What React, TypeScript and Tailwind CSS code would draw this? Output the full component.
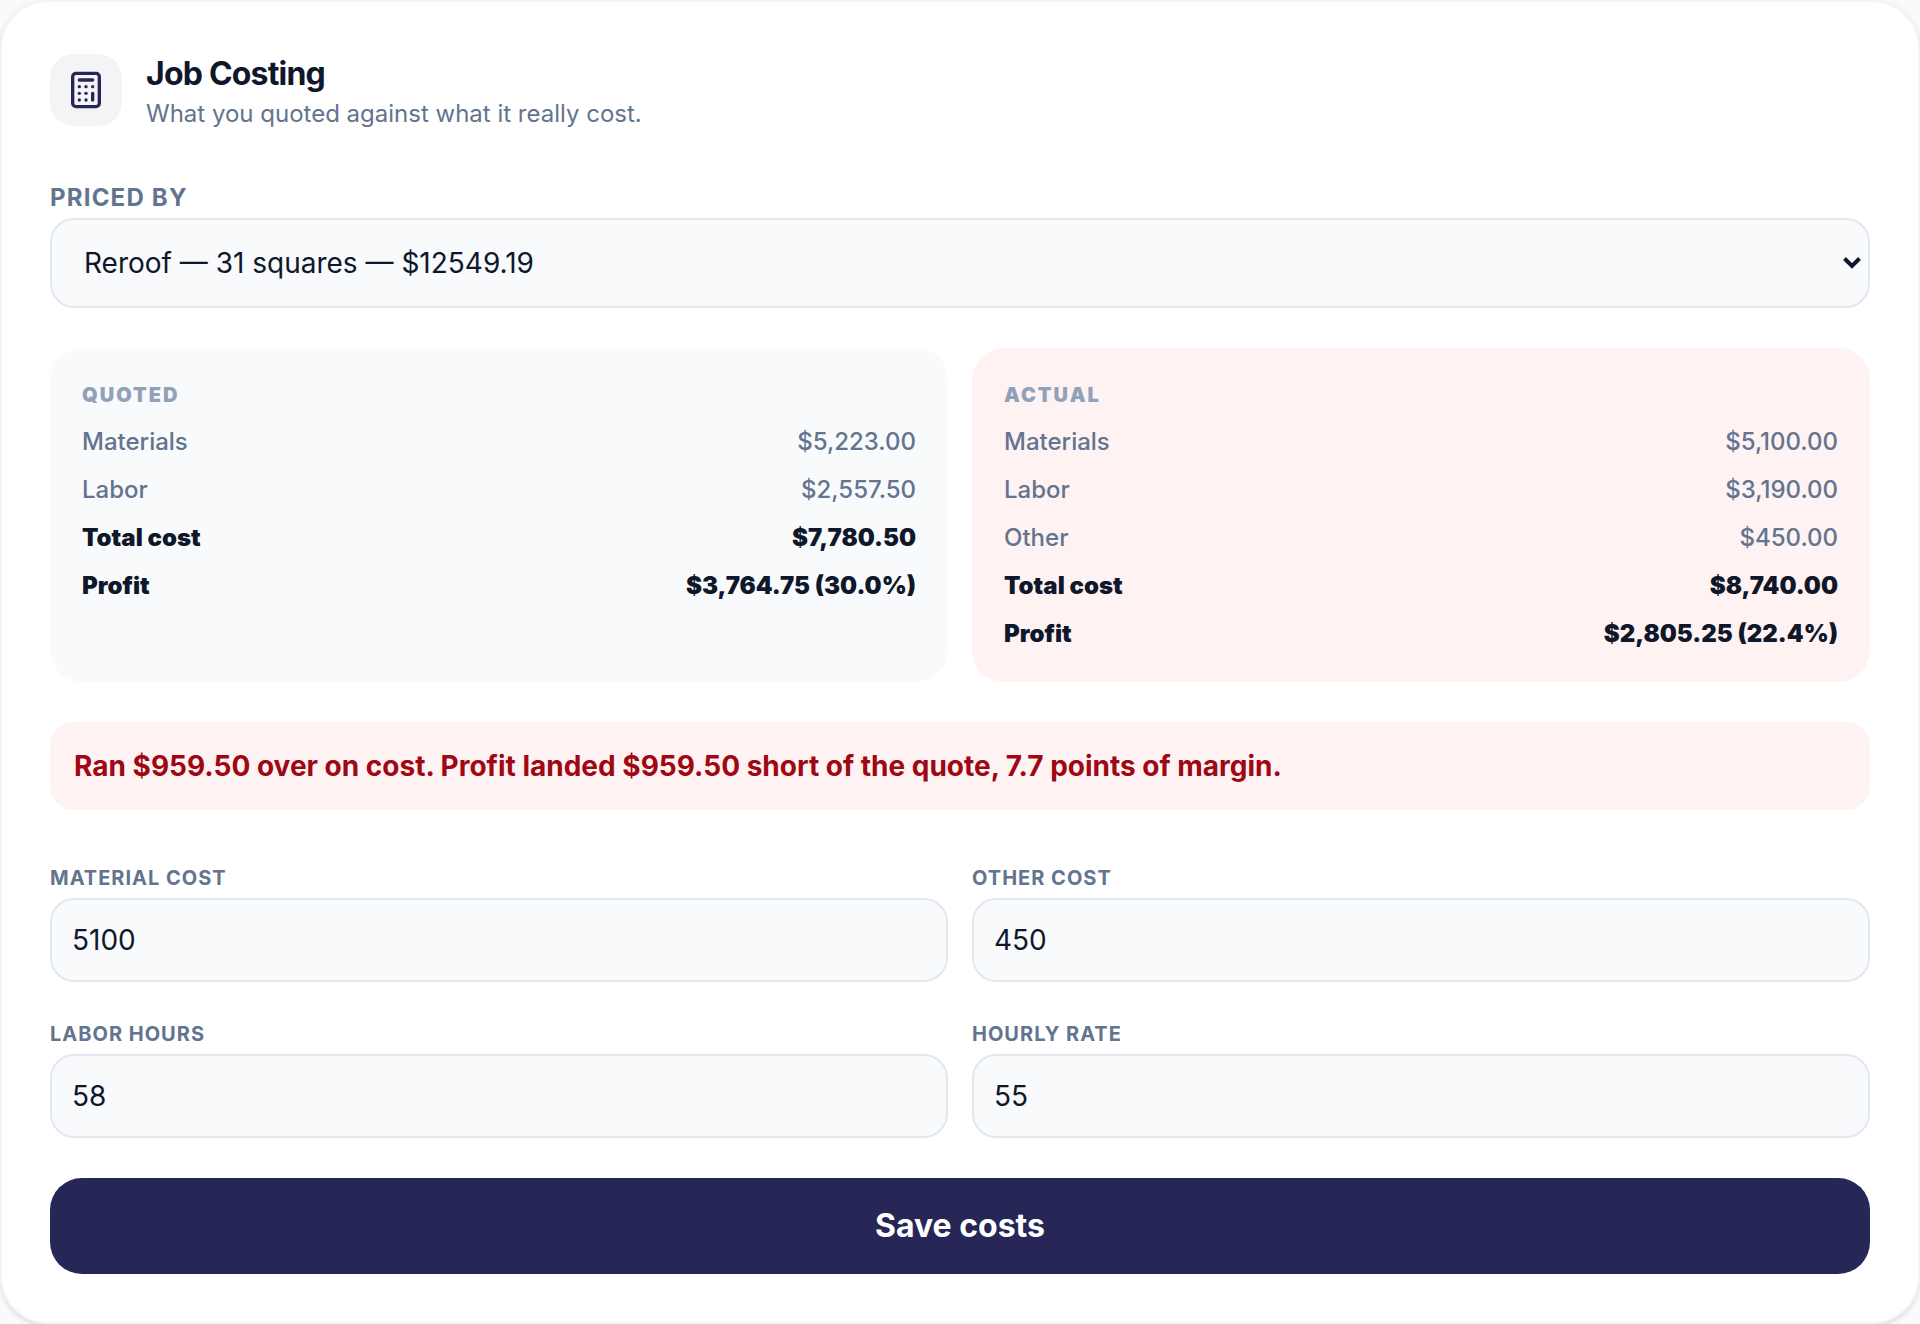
import { useState } from "react";
import { Calculator } from "lucide-react";

interface ICostRow {
  label: string
  value: string
  strong?: boolean
}

interface ICostPanelProps {
  title: string
  rows: ICostRow[]
  over?: boolean
}

interface ICostFieldProps {
  id: string
  label: string
  initial: string
}

const quoted: ICostRow[] = [
  { label: "Materials", value: "$5,223.00" },
  { label: "Labor", value: "$2,557.50" },
  { label: "Total cost", value: "$7,780.50", strong: true },
  { label: "Profit", value: "$3,764.75 (30.0%)", strong: true },
];

const actual: ICostRow[] = [
  { label: "Materials", value: "$5,100.00" },
  { label: "Labor", value: "$3,190.00" },
  { label: "Other", value: "$450.00" },
  { label: "Total cost", value: "$8,740.00", strong: true },
  { label: "Profit", value: "$2,805.25 (22.4%)", strong: true },
];

function CostPanel({ title, rows, over }: ICostPanelProps) {
  return (
    <section className={`rounded-[32px] p-8 ${over ? "bg-red-50" : "bg-slate-50"}`}>
      <h3 className="text-xl leading-[30px] font-black uppercase tracking-widest text-slate-400">{title}</h3>
      <dl className="mt-4 flex flex-col gap-4">
        {rows.map((row) => (
          <div
            key={row.label}
            className={`flex justify-between text-2xl leading-8 ${row.strong ? "font-black text-slate-900" : "font-medium text-slate-500"}`}
          >
            <dt>{row.label}</dt>
            <dd>{row.value}</dd>
          </div>
        ))}
      </dl>
    </section>
  )
}

function CostField({ id, label, initial }: ICostFieldProps) {
  const [value, setValue] = useState(initial);

  return (
    <div className="flex flex-col">
      <label htmlFor={id} className="text-xl leading-10 font-bold uppercase tracking-wider text-slate-500">{label}</label>
      <input
        id={id}
        type="text"
        inputMode="decimal"
        value={value}
        onChange={(e) => setValue(e.target.value)}
        className="w-full rounded-3xl border-2 border-slate-200 bg-slate-50 px-5 py-5 text-[28px] leading-10 text-slate-900"
      />
    </div>
  )
}

export default function App() {
  return (
    <div className="min-h-screen bg-slate-50 font-['Inter','Liberation_Sans',sans-serif]">
      <main className="rounded-[48px] border-2 border-slate-100 bg-white p-12 shadow-[0_2px_6px_rgba(0,0,0,0.1),0_2px_4px_-2px_rgba(0,0,0,0.1)]">
        <header className="mb-12 flex items-center gap-6">
          <div className="flex size-18 shrink-0 items-center justify-center rounded-3xl bg-[#f4f4f6]">
            <Calculator size={40} className="text-[#262657]" />
          </div>
          <div>
            <h2 className="text-[32px] leading-12 font-bold tracking-tight text-slate-900">Job Costing</h2>
            <p className="text-2xl leading-8 text-slate-500">What you quoted against what it really cost.</p>
          </div>
        </header>

        <div className="flex flex-col">
          <label htmlFor="priced-by" className="text-2xl leading-10 font-bold uppercase tracking-wider text-slate-500">Priced by</label>
          <div className="relative">
            <select
              id="priced-by"
              className="block h-[90px] w-full appearance-none rounded-3xl border-2 border-slate-200 bg-slate-50 px-8 text-[28px] text-slate-900"
            >
              <option>Reroof — 31 squares — $12549.19</option>
            </select>
            <svg
              viewBox="0 0 18 12"
              className="pointer-events-none absolute top-[39px] right-[9px] h-3 w-[18px] text-slate-900"
              fill="none"
              stroke="currentColor"
              strokeWidth="4"
              aria-hidden="true"
            >
              <path d="M1.5 1.5 9 9l7.5-7.5" />
            </svg>
          </div>
        </div>

        <div className="mt-10 grid grid-cols-2 gap-6">
          <CostPanel title="Quoted" rows={quoted} />
          <CostPanel title="Actual" rows={actual} over />
        </div>

        <p className="mt-10 rounded-3xl bg-red-50 p-6 text-[28px] leading-10 font-bold text-red-800">
          Ran $959.50 over on cost. Profit landed $959.50 short of the quote, 7.7 points of margin.
        </p>

        <form className="mt-12" onSubmit={(e) => e.preventDefault()}>
          <div className="grid grid-cols-2 gap-x-6 gap-y-8">
            <CostField id="material-cost" label="Material cost" initial="5100" />
            <CostField id="other-cost" label="Other cost" initial="450" />
            <CostField id="labor-hours" label="Labor hours" initial="58" />
            <CostField id="hourly-rate" label="Hourly rate" initial="55" />
          </div>
          <button type="submit" className="mt-10 w-full rounded-[32px] bg-[#262657] py-6 text-[32px] leading-12 font-bold text-white">
            Save costs
          </button>
        </form>
      </main>
    </div>
  )
}
